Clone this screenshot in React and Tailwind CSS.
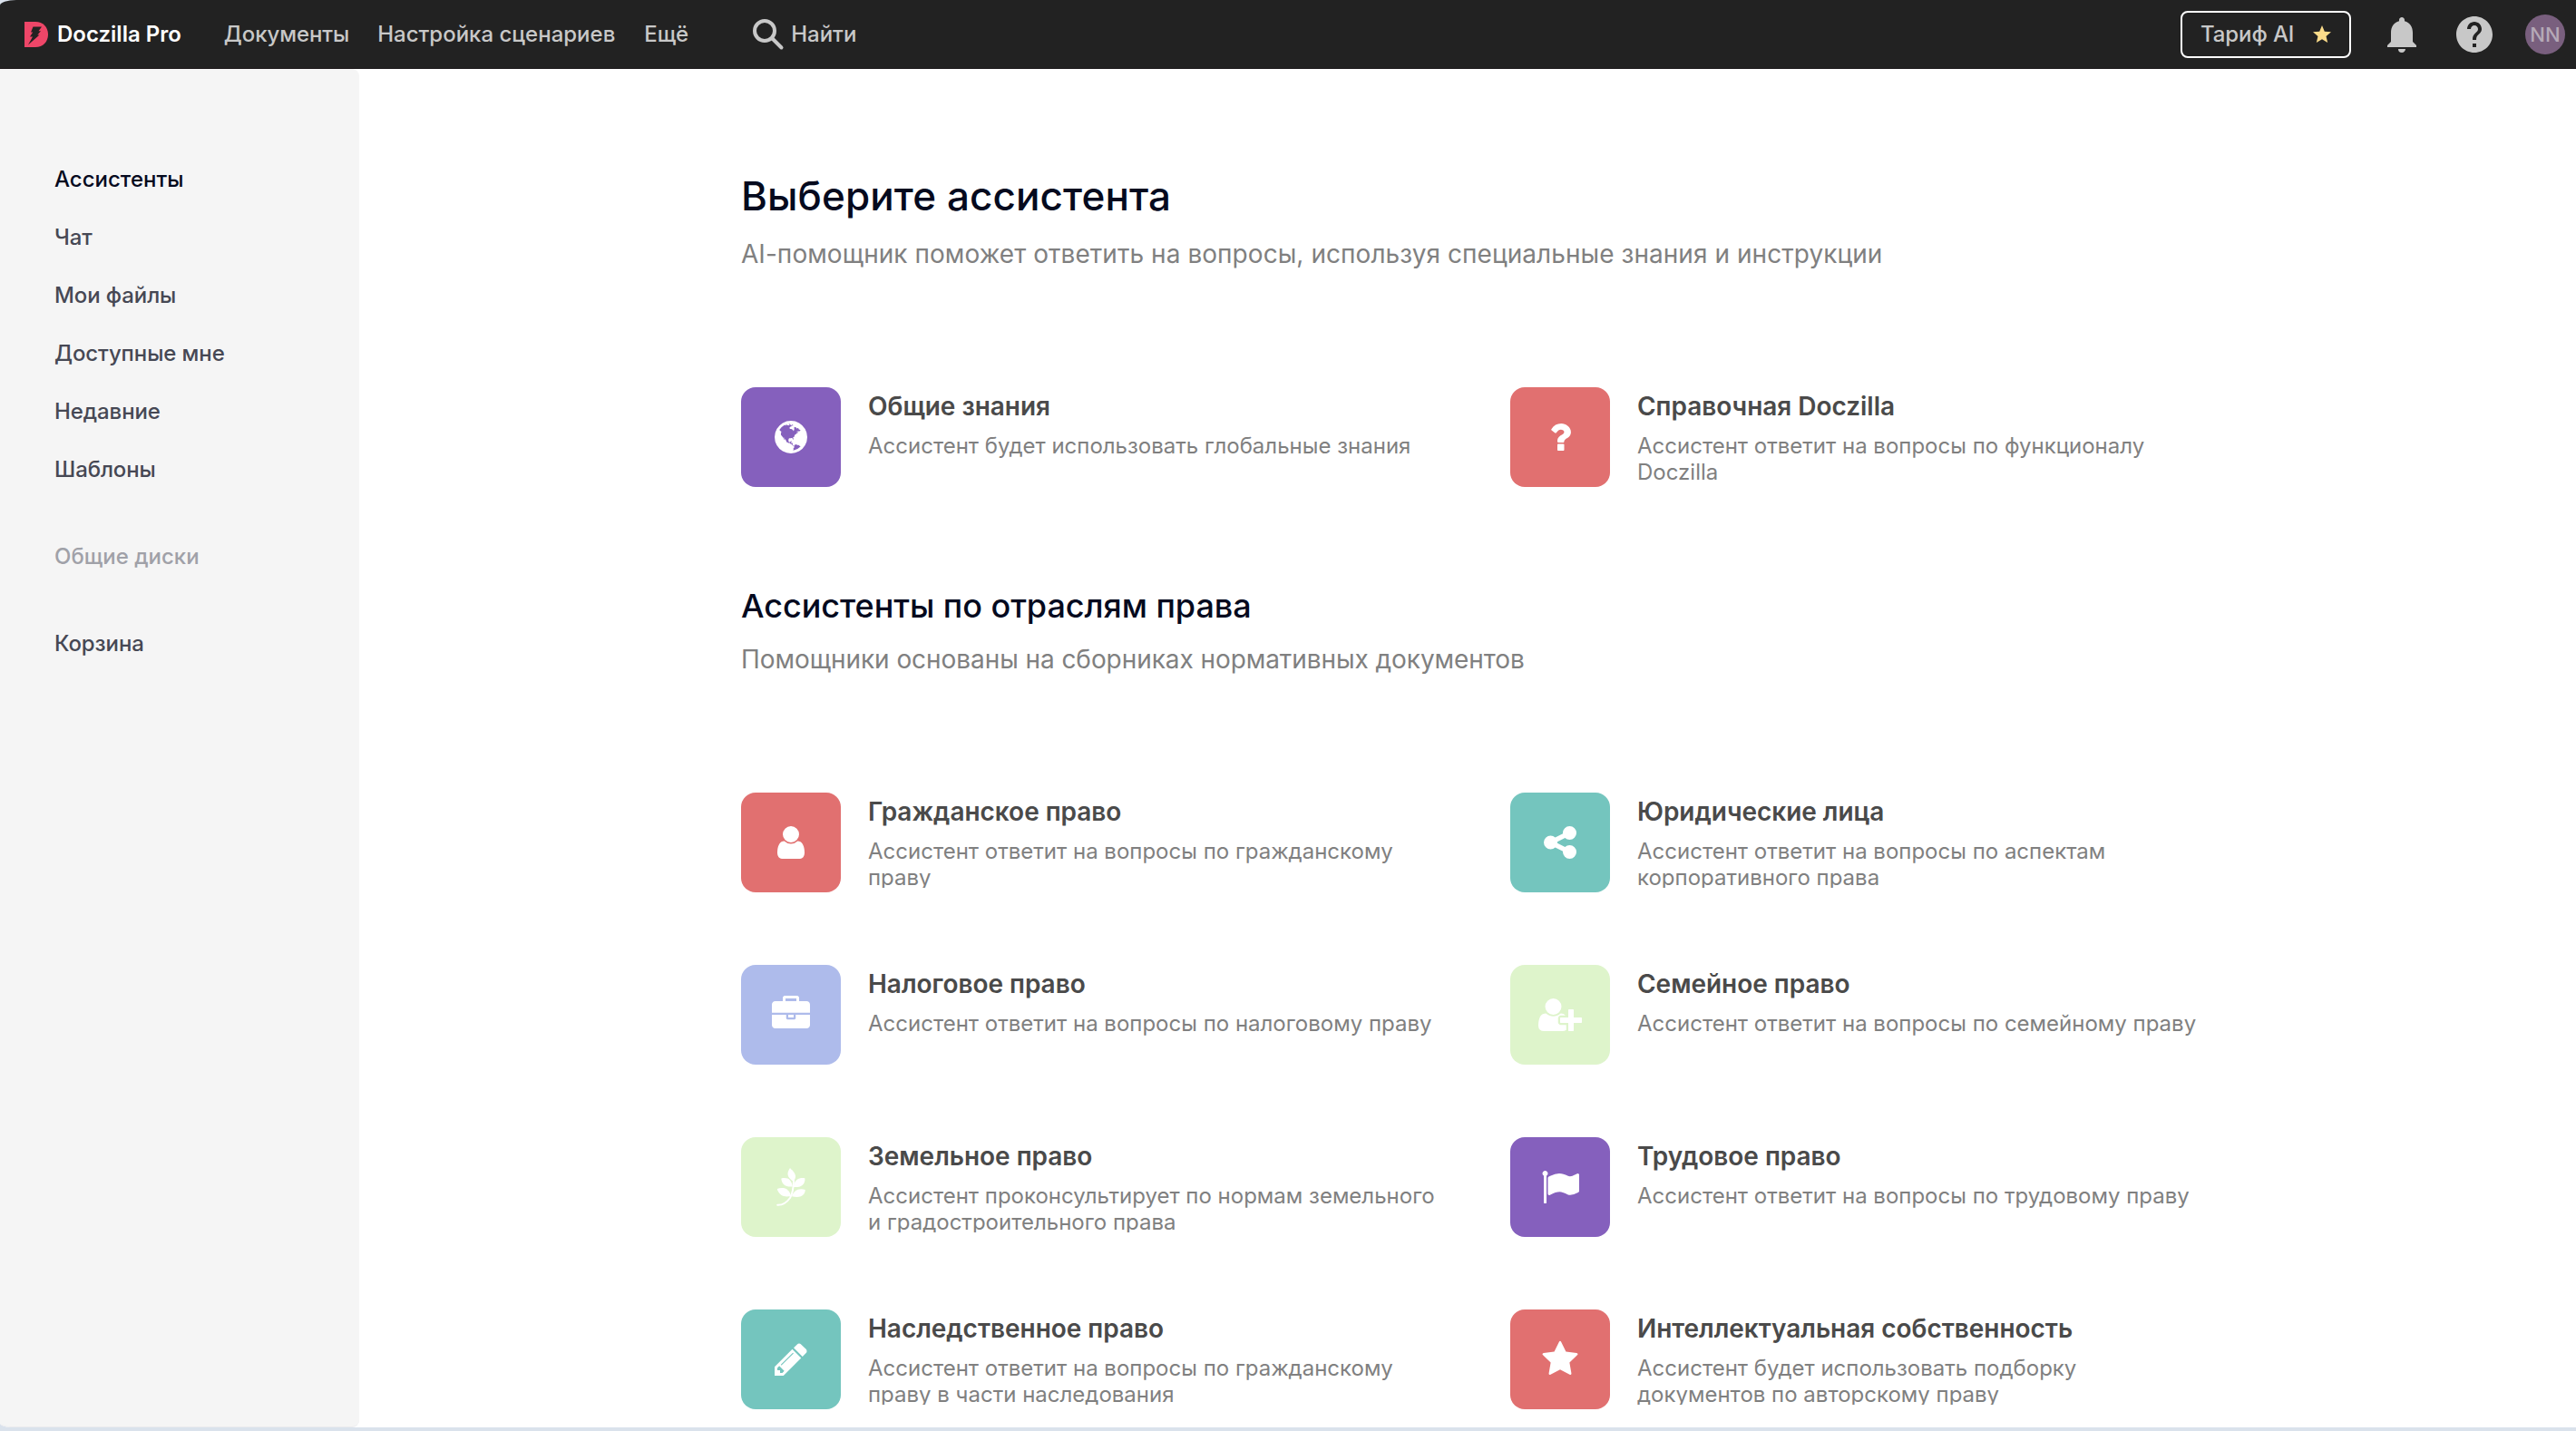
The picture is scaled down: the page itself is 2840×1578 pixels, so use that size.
import React, { useState } from 'react';
import { MdHelp, MdNotifications, MdStar } from 'react-icons/md';

const icons = {
  globe: 'M896 128q209 0 385.5 103t279.5 279.5 103 385.5-103 385.5-279.5 279.5-385.5 103-385.5-103-279.5-279.5-103-385.5 103-385.5 279.5-279.5 385.5-103zm274 521q-2 1-9.5 9.5t-13.5 9.5q2 0 4.5-5t5-11 3.5-7q6-7 22-15 14-6 52-12 34-8 51 11-2-2 9.5-13t14.5-12q3-2 15-4.5t15-7.5l2-22q-12 1-17.5-7t-6.5-21q0 2-6 8 0-7-4.5-8t-11.5 1-9 1q-10-3-15-7.5t-8-16.5-4-15q-2-5-9.5-11t-9.5-10q-1-2-2.5-5.5t-3-6.5-4-5.5-5.5-2.5-7 5-7.5 10-4.5 5q-3-2-6-1.5t-4.5 1-4.5 3-5 3.5q-3 2-8.5 3t-8.5 2q15-5-1-11-10-4-16-3 9-4 7.5-12t-8.5-14h5q-1-4-8.5-8.5t-17.5-8.5-13-6q-8-5-34-9.5t-33-.5q-5 6-4.5 10.5t4 14 3.5 12.5q1 6-5.5 13t-6.5 12q0 7 14 15.5t10 21.5q-3 8-16 16t-16 12q-5 8-1.5 18.5t10.5 16.5q2 2 1.5 4t-3.5 4.5-5.5 4-6.5 3.5l-3 2q-11 5-20.5-6t-13.5-26q-7-25-16-30-23-8-29 1-5-13-41-26-25-9-58-4 6-1 0-15-7-15-19-12 3-6 4-17.5t1-13.5q3-13 12-23 1-1 7-8.5t9.5-13.5.5-6q35 4 50-11 5-5 11.5-17t10.5-17q9-6 14-5.5t14.5 5.5 14.5 5q14 1 15.5-11t-7.5-20q12 1 3-17-4-7-8-9-12-4-27 5-8 4 2 8-1-1-9.5 10.5t-16.5 17.5-16-5q-1-1-5.5-13.5t-9.5-13.5q-8 0-16 15 3-8-11-15t-24-8q19-12-8-27-7-4-20.5-5t-19.5 4q-5 7-5.5 11.5t5 8 10.5 5.5 11.5 4 8.5 3q14 10 8 14-2 1-8.5 3.5t-11.5 4.5-6 4q-3 4 0 14t-2 14q-5-5-9-17.5t-7-16.5q7 9-25 6l-10-1q-4 0-16 2t-20.5 1-13.5-8q-4-8 0-20 1-4 4-2-4-3-11-9.5t-10-8.5q-46 15-94 41 6 1 12-1 5-2 13-6.5t10-5.5q34-14 42-7l5-5q14 16 20 25-7-4-30-1-20 6-22 12 7 12 5 18-4-3-11.5-10t-14.5-11-15-5q-16 0-22 1-146 80-235 222 7 7 12 8 4 1 5 9t2.5 11 11.5-3q9 8 3 19 1-1 44 27 19 17 21 21 3 11-10 18-1-2-9-9t-9-4q-3 5 .5 18.5t10.5 12.5q-7 0-9.5 16t-2.5 35.5-1 23.5l2 1q-3 12 5.5 34.5t21.5 19.5q-13 3 20 43 6 8 8 9 3 2 12 7.5t15 10 10 10.5q4 5 10 22.5t14 23.5q-2 6 9.5 20t10.5 23q-1 0-2.5 1t-2.5 1q3 7 15.5 14t15.5 13q1 3 2 10t3 11 8 2q2-20-24-62-15-25-17-29-3-5-5.5-15.5t-4.5-14.5q2 0 6 1.5t8.5 3.5 7.5 4 2 3q-3 7 2 17.5t12 18.5 17 19 12 13q6 6 14 19.5t0 13.5q9 0 20 10.5t17 19.5q5 8 8 26t5 24q2 7 8.5 13.5t12.5 9.5l16 8 13 7q5 2 18.5 10.5t21.5 11.5q10 4 16 4t14.5-2.5 13.5-3.5q15-2 29 15t21 21q36 19 55 11-2 1 .5 7.5t8 15.5 9 14.5 5.5 8.5q5 6 18 15t18 15q6-4 7-9-3 8 7 20t18 10q14-3 14-32-31 15-49-18 0-1-2.5-5.5t-4-8.5-2.5-8.5 0-7.5 5-3q9 0 10-3.5t-2-12.5-4-13q-1-8-11-20t-12-15q-5 9-16 8t-16-9q0 1-1.5 5.5t-1.5 6.5q-13 0-15-1 1-3 2.5-17.5t3.5-22.5q1-4 5.5-12t7.5-14.5 4-12.5-4.5-9.5-17.5-2.5q-19 1-26 20-1 3-3 10.5t-5 11.5-9 7q-7 3-24 2t-24-5q-13-8-22.5-29t-9.5-37q0-10 2.5-26.5t3-25-5.5-24.5q3-2 9-9.5t10-10.5q2-1 4.5-1.5t4.5 0 4-1.5 3-6q-1-1-4-3-3-3-4-3 7 3 28.5-1.5t27.5 1.5q15 11 22-2 0-1-2.5-9.5t-.5-13.5q5 27 29 9 3 3 15.5 5t17.5 5q3 2 7 5.5t5.5 4.5 5-.5 8.5-6.5q10 14 12 24 11 40 19 44 7 3 11 2t4.5-9.5 0-14-1.5-12.5l-1-8v-18l-1-8q-15-3-18.5-12t1.5-18.5 15-18.5q1-1 8-3.5t15.5-6.5 12.5-8q21-19 15-35 7 0 11-9-1 0-5-3t-7.5-5-4.5-2q9-5 2-16 5-3 7.5-11t7.5-10q9 12 21 2 8-8 1-16 5-7 20.5-10.5t18.5-9.5q7 2 8-2t1-12 3-12q4-5 15-9t13-5l17-11q3-4 0-4 18 2 31-11 10-11-6-20 3-6-3-9.5t-15-5.5q3-1 11.5-.5t10.5-1.5q15-10-7-16-17-5-43 12zm-163 877q206-36 351-189-3-3-12.5-4.5t-12.5-3.5q-18-7-24-8 1-7-2.5-13t-8-9-12.5-8-11-7q-2-2-7-6t-7-5.5-7.5-4.5-8.5-2-10 1l-3 1q-3 1-5.5 2.5t-5.5 3-4 3 0 2.5q-21-17-36-22-5-1-11-5.5t-10.5-7-10-1.5-11.5 7q-5 5-6 15t-2 13q-7-5 0-17.5t2-18.5q-3-6-10.5-4.5t-12 4.5-11.5 8.5-9 6.5-8.5 5.5-8.5 7.5q-3 4-6 12t-5 11q-2-4-11.5-6.5t-9.5-5.5q2 10 4 35t5 38q7 31-12 48-27 25-29 40-4 22 12 26 0 7-8 20.5t-7 21.5q0 6 2 16z',
  question: 'M1088 1256v240q0 16-12 28t-28 12h-240q-16 0-28-12t-12-28v-240q0-16 12-28t28-12h240q16 0 28 12t12 28zm316-600q0 54-15.5 101t-35 76.5-55 59.5-57.5 43.5-61 35.5q-41 23-68.5 65t-27.5 67q0 17-12 32.5t-28 15.5h-240q-15 0-25.5-18.5t-10.5-37.5v-45q0-83 65-156.5t143-108.5q59-27 84-56t25-76q0-42-46.5-74t-107.5-32q-65 0-108 29-35 25-107 115-13 16-31 16-12 0-25-8l-164-125q-13-10-15.5-25t5.5-28q160-266 464-266 80 0 161 31t146 83 106 127.5 41 158.5z',
  user: 'M1536 1399q0 109-62.5 187t-150.5 78h-854q-88 0-150.5-78t-62.5-187q0-85 8.5-160.5t31.5-152 58.5-131 94-89 134.5-34.5q131 128 313 128t313-128q76 0 134.5 34.5t94 89 58.5 131 31.5 152 8.5 160.5zm-256-887q0 159-112.5 271.5t-271.5 112.5-271.5-112.5-112.5-271.5 112.5-271.5 271.5-112.5 271.5 112.5 112.5 271.5z',
  share: 'M1344 1024q133 0 226.5 93.5t93.5 226.5-93.5 226.5-226.5 93.5-226.5-93.5-93.5-226.5q0-12 2-34l-360-180q-92 86-218 86-133 0-226.5-93.5t-93.5-226.5 93.5-226.5 226.5-93.5q126 0 218 86l360-180q-2-22-2-34 0-133 93.5-226.5t226.5-93.5 226.5 93.5 93.5 226.5-93.5 226.5-226.5 93.5q-126 0-218-86l-360 180q2 22 2 34t-2 34l360 180q92-86 218-86z',
  briefcase: 'M640 256h512v-128h-512v128zm1152 640v480q0 66-47 113t-113 47h-1472q-66 0-113-47t-47-113v-480h672v160q0 26 19 45t45 19h320q26 0 45-19t19-45v-160h672zm-768 0v128h-256v-128h256zm768-480v384h-1792v-384q0-66 47-113t113-47h352v-160q0-40 28-68t68-28h576q40 0 68 28t28 68v160h352q66 0 113 47t47 113z',
  flag: 'M320 256q0 72-64 110v1266q0 13-9.5 22.5t-22.5 9.5h-64q-13 0-22.5-9.5t-9.5-22.5v-1266q-64-38-64-110 0-53 37.5-90.5t90.5-37.5 90.5 37.5 37.5 90.5zm1472 64v763q0 25-12.5 38.5t-39.5 27.5q-215 116-369 116-61 0-123.5-22t-108.5-48-115.5-48-142.5-22q-192 0-464 146-17 9-33 9-26 0-45-19t-19-45v-742q0-32 31-55 21-14 79-43 236-120 421-120 107 0 200 29t219 88q38 19 88 19 54 0 117.5-21t110-47 88-47 54.5-21q26 0 45 19t19 45z',
  pencil: 'M491 1536l91-91-235-235-91 91v107h128v128h107zm523-928q0-22-22-22-10 0-17 7l-542 542q-7 7-7 17 0 22 22 22 10 0 17-7l542-542q7-7 7-17zm-54-192l416 416-832 832h-416v-416zm683 96q0 53-37 90l-166 166-416-416 166-165q36-38 90-38 53 0 91 38l235 234q37 39 37 91z',
  star: 'M1728 647q0 22-26 48l-363 354 86 500q1 7 1 20 0 21-10.5 35.5t-30.5 14.5q-19 0-40-12l-449-236-449 236q-22 12-40 12-21 0-31.5-14.5t-10.5-35.5q0-6 2-20l86-500-364-354q-25-27-25-48 0-37 56-46l502-73 225-455q19-41 49-41t49 41l225 455 502 73q56 9 56 46z',
  userPlus: 'M704 896q-159 0-271.5-112.5t-112.5-271.5 112.5-271.5 271.5-112.5 271.5 112.5 112.5 271.5-112.5 271.5-271.5 112.5zm960 128h352q13 0 22.5 9.5t9.5 22.5v192q0 13-9.5 22.5t-22.5 9.5h-352v352q0 13-9.5 22.5t-22.5 9.5h-192q-13 0-22.5-9.5t-9.5-22.5v-352h-352q-13 0-22.5-9.5t-9.5-22.5v-192q0-13 9.5-22.5t22.5-9.5h352v-352q0-13 9.5-22.5t22.5-9.5h192q13 0 22.5 9.5t9.5 22.5v352zm-736 224q0 52 38 90t90 38h256v238q-68 50-171 50h-874q-121 0-194-69t-73-190q0-53 3.5-103.5t14-109 26.5-108.5 43-97.5 62-81 85.5-53.5 111.5-20q19 0 39 17 79 61 154.5 91.5t164.5 30.5 164.5-30.5 154.5-91.5q20-17 39-17 132 0 217 96h-223q-52 0-90 38t-38 90v192z',
};

const general = [
  { icon: 'globe', color: 'bg-[#8560bd]', title: 'Общие знания', text: 'Ассистент будет использовать глобальные знания' },
  { icon: 'question', color: 'bg-[#e17070]', title: 'Справочная Doczilla', text: 'Ассистент ответит на вопросы по функционалу Doczilla' },
];

const branches = [
  { icon: 'user', color: 'bg-[#e17070]', title: 'Гражданское право', text: 'Ассистент ответит на вопросы по гражданскому праву' },
  { icon: 'share', color: 'bg-[#74c5be]', title: 'Юридические лица', text: 'Ассистент ответит на вопросы по аспектам корпоративного права' },
  { icon: 'briefcase', color: 'bg-[#aebbeb]', title: 'Налоговое право', text: 'Ассистент ответит на вопросы по налоговому праву' },
  { icon: 'userPlus', color: 'bg-[#def4cb]', title: 'Семейное право', text: 'Ассистент ответит на вопросы по семейному праву' },
  { icon: 'leaf', color: 'bg-[#def4cb]', title: 'Земельное право', text: 'Ассистент проконсультирует по нормам земельного и градостроительного права' },
  { icon: 'flag', color: 'bg-[#8560bd]', title: 'Трудовое право', text: 'Ассистент ответит на вопросы по трудовому праву' },
  { icon: 'pencil', color: 'bg-[#74c5be]', title: 'Наследственное право', text: 'Ассистент ответит на вопросы по гражданскому праву в части наследования' },
  { icon: 'star', color: 'bg-[#e17070]', title: 'Интеллектуальная собственность', text: 'Ассистент будет использовать подборку документов по авторскому праву' },
];

const folders = ['Ассистенты', 'Чат', 'Мои файлы', 'Доступные мне', 'Недавние', 'Шаблоны'];

function LeafIcon() {
  return (
    <svg viewBox="0 0 32 42" className="h-[42px] w-8" fill="currentColor">
      <path d="M15 0C18 3 21.500 6.500 21 10C20.600 12.500 19.500 14 18.300 14.500C15 12.500 12.300 9.500 12.500 6C12.700 3.500 14 1.500 15 0Z" />
      <path d="M5.300 11.500C9 10.500 13 11 15 13.500C16.800 15.800 17.600 18.500 17.700 20.500C14 20.800 10 20.300 8 18C6 16 5.500 13.500 5.300 11.500Z" />
      <path d="M31.300 11.300C31.800 14 31 17 28.500 19C26 21 22.500 21.300 19 21C19 18 20 15 22.500 13C25 11 28.500 10.700 31.300 11.300Z" />
      <path d="M.8 23C4 21.800 8.500 21.600 11.500 23.500C14.300 25.500 15.600 28.500 16 31C12 31.800 8 31.800 5 29.500C2.500 27.500 1.300 25.200 .8 23Z" />
      <path d="M31.800 24C31.800 27 30 30 27 31.300C24 32.500 20 32 17 31.300C18 28 20.300 25 23.500 23.800C26.500 22.800 29.500 23.200 31.800 24Z" />
      <path d="M19 14C18.800 22 18 28 15 33C11 38.500 6 41 1.200 40.800" fill="none" stroke="currentColor" strokeWidth="2" strokeLinecap="round" />
    </svg>
  );
}

function AssistantIcon({ name }) {
  if (name === 'leaf') {
    return <LeafIcon />;
  }
  if (name === 'userPlus') {
    return (
      <svg viewBox="0 0 2048 1792" className="h-[42px] w-[48px]" fill="currentColor">
        <path d={icons.userPlus} />
      </svg>
    );
  }
  return (
    <svg viewBox="0 0 1792 1792" className="size-[42px]" fill="currentColor">
      <path d={icons[name]} />
    </svg>
  );
}

function AssistantCard({ icon, color, title, text }) {
  return (
    <div className="flex h-[110px] gap-[30px]">
      <div className={`flex size-[110px] shrink-0 items-center justify-center rounded-2xl text-white ${color}`}>
        <AssistantIcon name={icon} />
      </div>
      <div className="w-[630px] pt-1">
        <h3 className="text-[28px] font-semibold leading-[34px] tracking-[-0.03px] text-[#4a4a4a]">{title}</h3>
        <p className="mt-3 h-[55px] overflow-hidden text-2xl leading-[29px] text-[#808080]">{text}</p>
      </div>
    </div>
  );
}

function AssistantGrid({ items }) {
  return (
    <div className="mt-[130px] grid grid-cols-[848px_848px] gap-y-20">
      {items.map((item) => (
        <AssistantCard key={item.title} {...item} />
      ))}
    </div>
  );
}

function Header() {
  return (
    <header className="flex h-[76px] shrink-0 items-center rounded-tl-[18px_6px] bg-[#222222] text-2xl font-medium leading-[29px] text-[#c8c8c8] shadow-[inset_0_-1px_0_#1a1618]">
      <svg viewBox="0 0 26 28" className="ml-[27px] h-7 w-[26px]">
        <path d="M0 0H12C20.500 0 26 6 26 14S20.500 28 12 28H0Z" fill="#ee4668" />
        <path d="M9.500 5.500H19L15.500 10.200H18L14.300 14.600H16.500L4 25.500L9 16.500H6L9.200 11.500H7Z" fill="#222222" />
      </svg>
      <div className="ml-[10px] pb-px font-semibold text-white">Doczilla Pro</div>
      <nav className="ml-[47px] flex pb-px">
        <a className="tracking-[-0.1px]">Документы</a>
        <a className="ml-[31px]">Настройка сценариев</a>
        <a className="ml-[32px]">Ещё</a>
      </nav>
      <div className="ml-[70px] flex items-center gap-[7px] pb-px">
        <svg viewBox="0 0 36 36" className="size-9" fill="none" stroke="currentColor" strokeWidth="4">
          <circle cx="14" cy="14" r="11" />
          <path d="M22.500 22.500L32.500 32.500" strokeLinecap="round" />
        </svg>
        Найти
      </div>
      <button className="ml-auto flex h-[52px] w-[188px] items-center justify-between rounded-lg border-2 border-white pl-5 pr-[18px] tracking-[-0.1px]">
        <span className="pb-px">Тариф AI</span>
        <MdStar className="size-6 text-[#fbdc8a]" />
      </button>
      <MdNotifications className="ml-8 size-12" />
      <MdHelp className="ml-8 size-12" />
      <div className="ml-8 mr-3 flex size-11 items-center justify-center rounded-full bg-[#795f7e] text-[22px] text-[#b5a9b7]">
        NN
      </div>
    </header>
  );
}

export default function App() {
  const [active, setActive] = useState('Ассистенты');

  return (
    <div className="h-[1578px] w-[2840px] overflow-hidden bg-[#dae2ec] font-['Inter',sans-serif]">
      <div className="flex h-[1574px] flex-col">
        <Header />
        <div className="flex min-h-0 flex-1 rounded-bl-[12px_5px] bg-white">
          {/* Sidebar */}
          <aside className="w-[396px] shrink-0 rounded-r-lg rounded-bl-[12px_5px] border-b border-[#ebebee] bg-[#f5f5f5] pl-[60px] pt-[90px] text-2xl font-medium tracking-[-0.1px] text-[#464854]">
            {folders.map((name) => (
              <div
                key={name}
                onClick={() => setActive(name)}
                className={`flex h-16 cursor-pointer items-center ${name === active ? 'tracking-normal text-[#050a1e]' : ''}`}
              >
                {name}
              </div>
            ))}
            <div className="mt-8 flex h-16 items-center tracking-normal text-[#a0a1a8]">Общие диски</div>
            <div className="mt-8 flex h-16 items-center">Корзина</div>
          </aside>

          {/* Content */}
          <main className="pl-[421px] pt-[114px]">
            <h1 className="text-[44px] font-medium leading-[53px] tracking-[0.1px] text-[#050a1e]">Выберите ассистента</h1>
            <p className="mt-5 text-[28px] leading-[34px] tracking-[0.05px] text-[#808080]">
              AI-помощник поможет ответить на вопросы, используя специальные знания и инструкции
            </p>
            <AssistantGrid items={general} />

            <h2 className="mt-[109px] text-[36px] font-medium leading-[44px] tracking-[-0.05px] text-[#050a1e]">
              Ассистенты по отраслям права
            </h2>
            <p className="mt-5 text-[28px] leading-[34px] tracking-[-0.07px] text-[#808080]">
              Помощники основаны на сборниках нормативных документов
            </p>
            <AssistantGrid items={branches} />
          </main>
        </div>
      </div>
    </div>
  );
}
